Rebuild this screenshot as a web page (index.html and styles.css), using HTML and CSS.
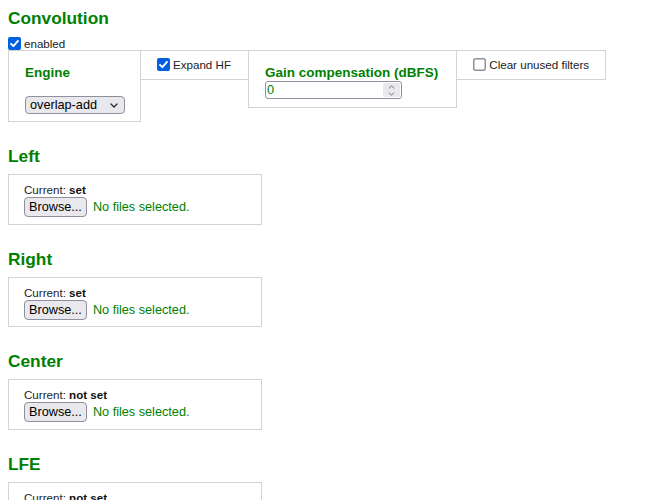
FILE: index.html
```html
<!DOCTYPE html>
<html lang="en">
<head>
  <meta charset="UTF-8" />
  <meta name="viewport" content="width=device-width, initial-scale=1.0"/>
  <title>Convolution</title>
  <link rel="stylesheet" href="styles.css">
</head>
<body>
  <h2 class="title">Convolution</h2>
  <label class="check">
    <svg class="box" viewBox="0 0 13 13"><rect width="13" height="13" rx="2" fill="#0060df"/><path d="M3 6.8 L5.4 9.2 L10 3.9" fill="none" stroke="#fff" stroke-width="1.9" stroke-linecap="round" stroke-linejoin="round"/></svg>
    enabled
  </label>

  <div class="options">
    <div class="opt engine">
      <h4>Engine</h4>
      <div class="select">
        <span>overlap-add</span>
        <svg class="chev" viewBox="0 0 8 5"><path d="M1 1 L4 4 L7 1" fill="none" stroke="#222" stroke-width="1.2" stroke-linecap="round" stroke-linejoin="round"/></svg>
      </div>
    </div>
    <div class="opt flag">
      <label class="check">
        <svg class="box" viewBox="0 0 13 13"><rect width="13" height="13" rx="2" fill="#0060df"/><path d="M3 6.8 L5.4 9.2 L10 3.9" fill="none" stroke="#fff" stroke-width="1.9" stroke-linecap="round" stroke-linejoin="round"/></svg>
        Expand HF
      </label>
    </div>
    <div class="opt gain">
      <h4>Gain compensation (dBFS)</h4>
      <div class="number">
        <input type="text" value="0">
        <span class="spin">
          <svg viewBox="0 0 8 5"><path d="M1 4 L4 1 L7 4" fill="none" stroke="#555" stroke-width="1" stroke-linecap="round" stroke-linejoin="round"/></svg>
          <svg viewBox="0 0 8 5"><path d="M1 1 L4 4 L7 1" fill="none" stroke="#555" stroke-width="1" stroke-linecap="round" stroke-linejoin="round"/></svg>
        </span>
      </div>
    </div>
    <div class="opt flag clear">
      <label class="check">
        <svg class="box" viewBox="0 0 13 13"><rect x="0.75" y="0.75" width="11.5" height="11.5" rx="2" fill="#fff" stroke="#8f8f9d" stroke-width="1.5"/></svg>
        Clear unused filters
      </label>
    </div>
  </div>

  <div class="channel">
    <h2>Left</h2>
    <div class="file-box">
      <div class="current">Current: <b>set</b></div>
      <div class="picker"><button class="browse">Browse...</button><span class="nofile">No files selected.</span></div>
    </div>
  </div>

  <div class="channel">
    <h2>Right</h2>
    <div class="file-box">
      <div class="current">Current: <b>set</b></div>
      <div class="picker"><button class="browse">Browse...</button><span class="nofile">No files selected.</span></div>
    </div>
  </div>

  <div class="channel">
    <h2>Center</h2>
    <div class="file-box">
      <div class="current">Current: <b>not set</b></div>
      <div class="picker"><button class="browse">Browse...</button><span class="nofile">No files selected.</span></div>
    </div>
  </div>

  <div class="channel">
    <h2>LFE</h2>
    <div class="file-box">
      <div class="current">Current: <b>not set</b></div>
      <div class="picker"><button class="browse">Browse...</button><span class="nofile">No files selected.</span></div>
    </div>
  </div>
</body>
</html>
```

FILE: styles.css
```css
body {
  margin: 8px;
  font-family: "Liberation Sans", Arial, sans-serif;
  color: #222;
}
h2 {
  margin: 0;
  font-size: 17.3px;
  line-height: 20px;
  color: #008000;
}
h4 {
  margin: 0;
  font-size: 13.5px;
  line-height: 16px;
  color: #008000;
}
.title {
  margin-bottom: 9px;
}
.check {
  display: flex;
  align-items: center;
  height: 13px;
  font-size: 11.6px;
  white-space: nowrap;
}
.box {
  width: 13px;
  height: 13px;
  margin-right: 3px;
  flex: none;
}
.options {
  display: flex;
  align-items: flex-start;
}
.opt {
  border: 1px solid #d3d3d3;
}
.opt + .opt {
  margin-left: -1px;
}
.engine {
  padding: 14px 15px 7px 16px;
}
.engine h4 {
  margin-bottom: 15px;
}
.flag {
  padding: 7px 17px 8px 16px;
}
.clear {
  padding-right: 16px;
}
.gain {
  padding: 14px 18px 8px 16px;
}
.select {
  display: flex;
  align-items: center;
  justify-content: space-between;
  width: 100px;
  height: 18px;
  box-sizing: border-box;
  padding: 0 6px 0 4px;
  border: 1px solid #8f8f9d;
  border-radius: 4px;
  background: #e9e9ed;
  font-size: 12.7px;
  color: #000;
}
.chev {
  width: 8px;
  height: 5px;
}
.number {
  display: flex;
  width: 137px;
  height: 18px;
  box-sizing: border-box;
  border: 1px solid #8f8f9d;
  border-radius: 3px;
  background: #fff;
}
.number input {
  flex: 1;
  min-width: 0;
  border: 0;
  padding: 0 1px;
  margin: 0;
  background: transparent;
  font-family: inherit;
  font-size: 12.7px;
  color: #008000;
  outline: none;
}
.spin {
  display: flex;
  flex-direction: column;
  justify-content: space-around;
  align-items: center;
  width: 17px;
  margin: 1px 1px 1px 0;
  border-radius: 2px;
  background: #e9e9ed;
}
.spin svg {
  width: 7px;
  height: 4px;
}
.channel h2 {
  margin: 24px 0 8px;
}
.file-box {
  width: 254px;
  height: 50.5px;
  box-sizing: border-box;
  padding: 8px 15px 6px;
  border: 1px solid #d3d3d3;
}
.current {
  font-size: 11.6px;
  line-height: 14px;
}
.current b {
  color: #111;
}
.picker {
  display: flex;
  align-items: center;
  height: 20px;
}
.browse {
  height: 20px;
  box-sizing: border-box;
  margin: 0;
  padding: 0 4px;
  border: 1px solid #8f8f9d;
  border-radius: 4px;
  background: #e9e9ed;
  font-family: inherit;
  font-size: 12.7px;
  color: #000;
}
.nofile {
  margin-left: 6px;
  font-size: 12.7px;
  color: #008000;
}
```
